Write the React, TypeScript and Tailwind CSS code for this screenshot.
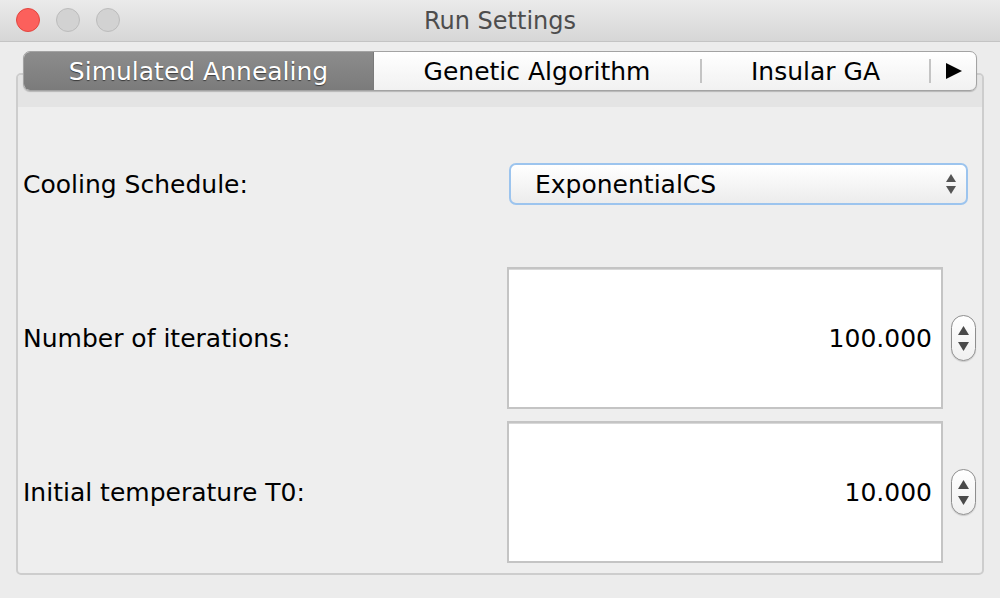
import React from "react"

const font = { fontFamily: '"DejaVu Sans", "Liberation Sans", sans-serif' }

function Spinner() {
  return (
    <div className="flex h-[46px] w-[25px] flex-col items-center justify-center gap-[7px] rounded-full border border-[#8e8e8e] bg-gradient-to-b from-white to-[#f0f0f0] shadow-[0_1px_1px_rgba(0,0,0,0.15)]">
      <svg width="11" height="9" viewBox="0 0 11 9">
        <path d="M5.5 0 L11 9 L0 9 Z" fill="#4a4a4a" />
      </svg>
      <svg width="11" height="9" viewBox="0 0 11 9">
        <path d="M0 0 L11 0 L5.5 9 Z" fill="#4a4a4a" />
      </svg>
    </div>
  )
}

function NumberRow({ label, value }: { label: string; value: string }) {
  return (
    <div className="flex items-center">
      <div className="flex-1 pt-[2px] text-[25px] text-black">{label}</div>
      <div className="flex h-[142px] w-[436px] items-center justify-end border-2 border-[#c4c4c4] bg-white pr-[9px] pt-[2px] text-[25px] text-black shadow-[inset_0_1px_0_#d8d8d8]">
        {value}
      </div>
      <div className="ml-[8px] mr-[6px]">
        <Spinner />
      </div>
    </div>
  )
}

export default function App() {
  return (
    <div className="flex h-[598px] w-[1000px] flex-col bg-[#ececec]" style={font}>
      {/* title bar */}
      <div className="relative flex h-[42px] items-center justify-center border-b border-[#c4c4c4] bg-gradient-to-b from-[#ebebeb] to-[#d6d6d6]">
        <div className="absolute left-[16px] top-[8px] flex gap-[16px]">
          <div className="h-[24px] w-[24px] rounded-full border border-[#e2463f] bg-[#fc605c]" />
          <div className="h-[24px] w-[24px] rounded-full border border-[#bcbcbc] bg-[#d2d2d2]" />
          <div className="h-[24px] w-[24px] rounded-full border border-[#bcbcbc] bg-[#d2d2d2]" />
        </div>
        <span className="text-[24px] text-[#4d4d4d]">Run Settings</span>
      </div>

      {/* tabs */}
      <div className="relative z-10 mx-[23px] mt-[9px] flex h-[40px] overflow-hidden rounded-[7px] border border-[#a3a3a3] bg-gradient-to-b from-white to-[#f1f1f1] shadow-[0_1px_1px_rgba(0,0,0,0.2)]">
        <div className="flex w-[350px] items-center justify-center border-r border-[#7a7a7a] bg-gradient-to-b from-[#8c8c8c] to-[#7b7b7b] pt-[2px] text-[25px] text-white [text-shadow:0_1px_1px_#3a3a3a]">
          Simulated Annealing
        </div>
        <div className="flex w-[326px] items-center justify-center pt-[2px] text-[25px] text-black">
          Genetic Algorithm
        </div>
        <div className="my-[7px] w-[2px] bg-[#c4c4c4]" />
        <div className="flex w-[227px] items-center justify-center pt-[2px] text-[25px] text-black">
          Insular GA
        </div>
        <div className="my-[7px] w-[2px] bg-[#c4c4c4]" />
        <div className="flex flex-1 items-center justify-center">
          <svg width="16" height="16" viewBox="0 0 16 16">
            <path d="M0 0 L16 8 L0 16 Z" fill="#000" />
          </svg>
        </div>
      </div>

      {/* panel */}
      <div className="mx-[16px] mt-[-18px] flex h-[502px] flex-col overflow-hidden rounded-[5px] border-2 border-[#cdcdcd] bg-[#eeeeee]">
        <div className="h-[32px] bg-[#e4e4e4]" />
        <div className="flex flex-col pl-[5px]">
          <div className="mt-[56px] flex items-center">
            <div className="flex-1 pt-[2px] text-[25px] text-black">Cooling Schedule:</div>
            <div className="mr-[14px] flex h-[42px] w-[459px] items-center justify-between rounded-[7px] border-2 border-[#9cc4ee] bg-gradient-to-b from-white to-[#ececec] pl-[24px] pr-[10px] text-[25px] text-black">
              <span className="pt-[1px]">ExponentialCS</span>
              <div className="flex flex-col items-center gap-[4px]">
                <svg width="10" height="8" viewBox="0 0 10 8">
                  <path d="M5 0 L10 8 L0 8 Z" fill="#555" />
                </svg>
                <svg width="10" height="8" viewBox="0 0 10 8">
                  <path d="M0 0 L10 0 L5 8 Z" fill="#555" />
                </svg>
              </div>
            </div>
          </div>
          <div className="mt-[62px]">
            <NumberRow label="Number of iterations:" value="100.000" />
          </div>
          <div className="mt-[12px]">
            <NumberRow label="Initial temperature T0:" value="10.000" />
          </div>
        </div>
      </div>
    </div>
  )
}
